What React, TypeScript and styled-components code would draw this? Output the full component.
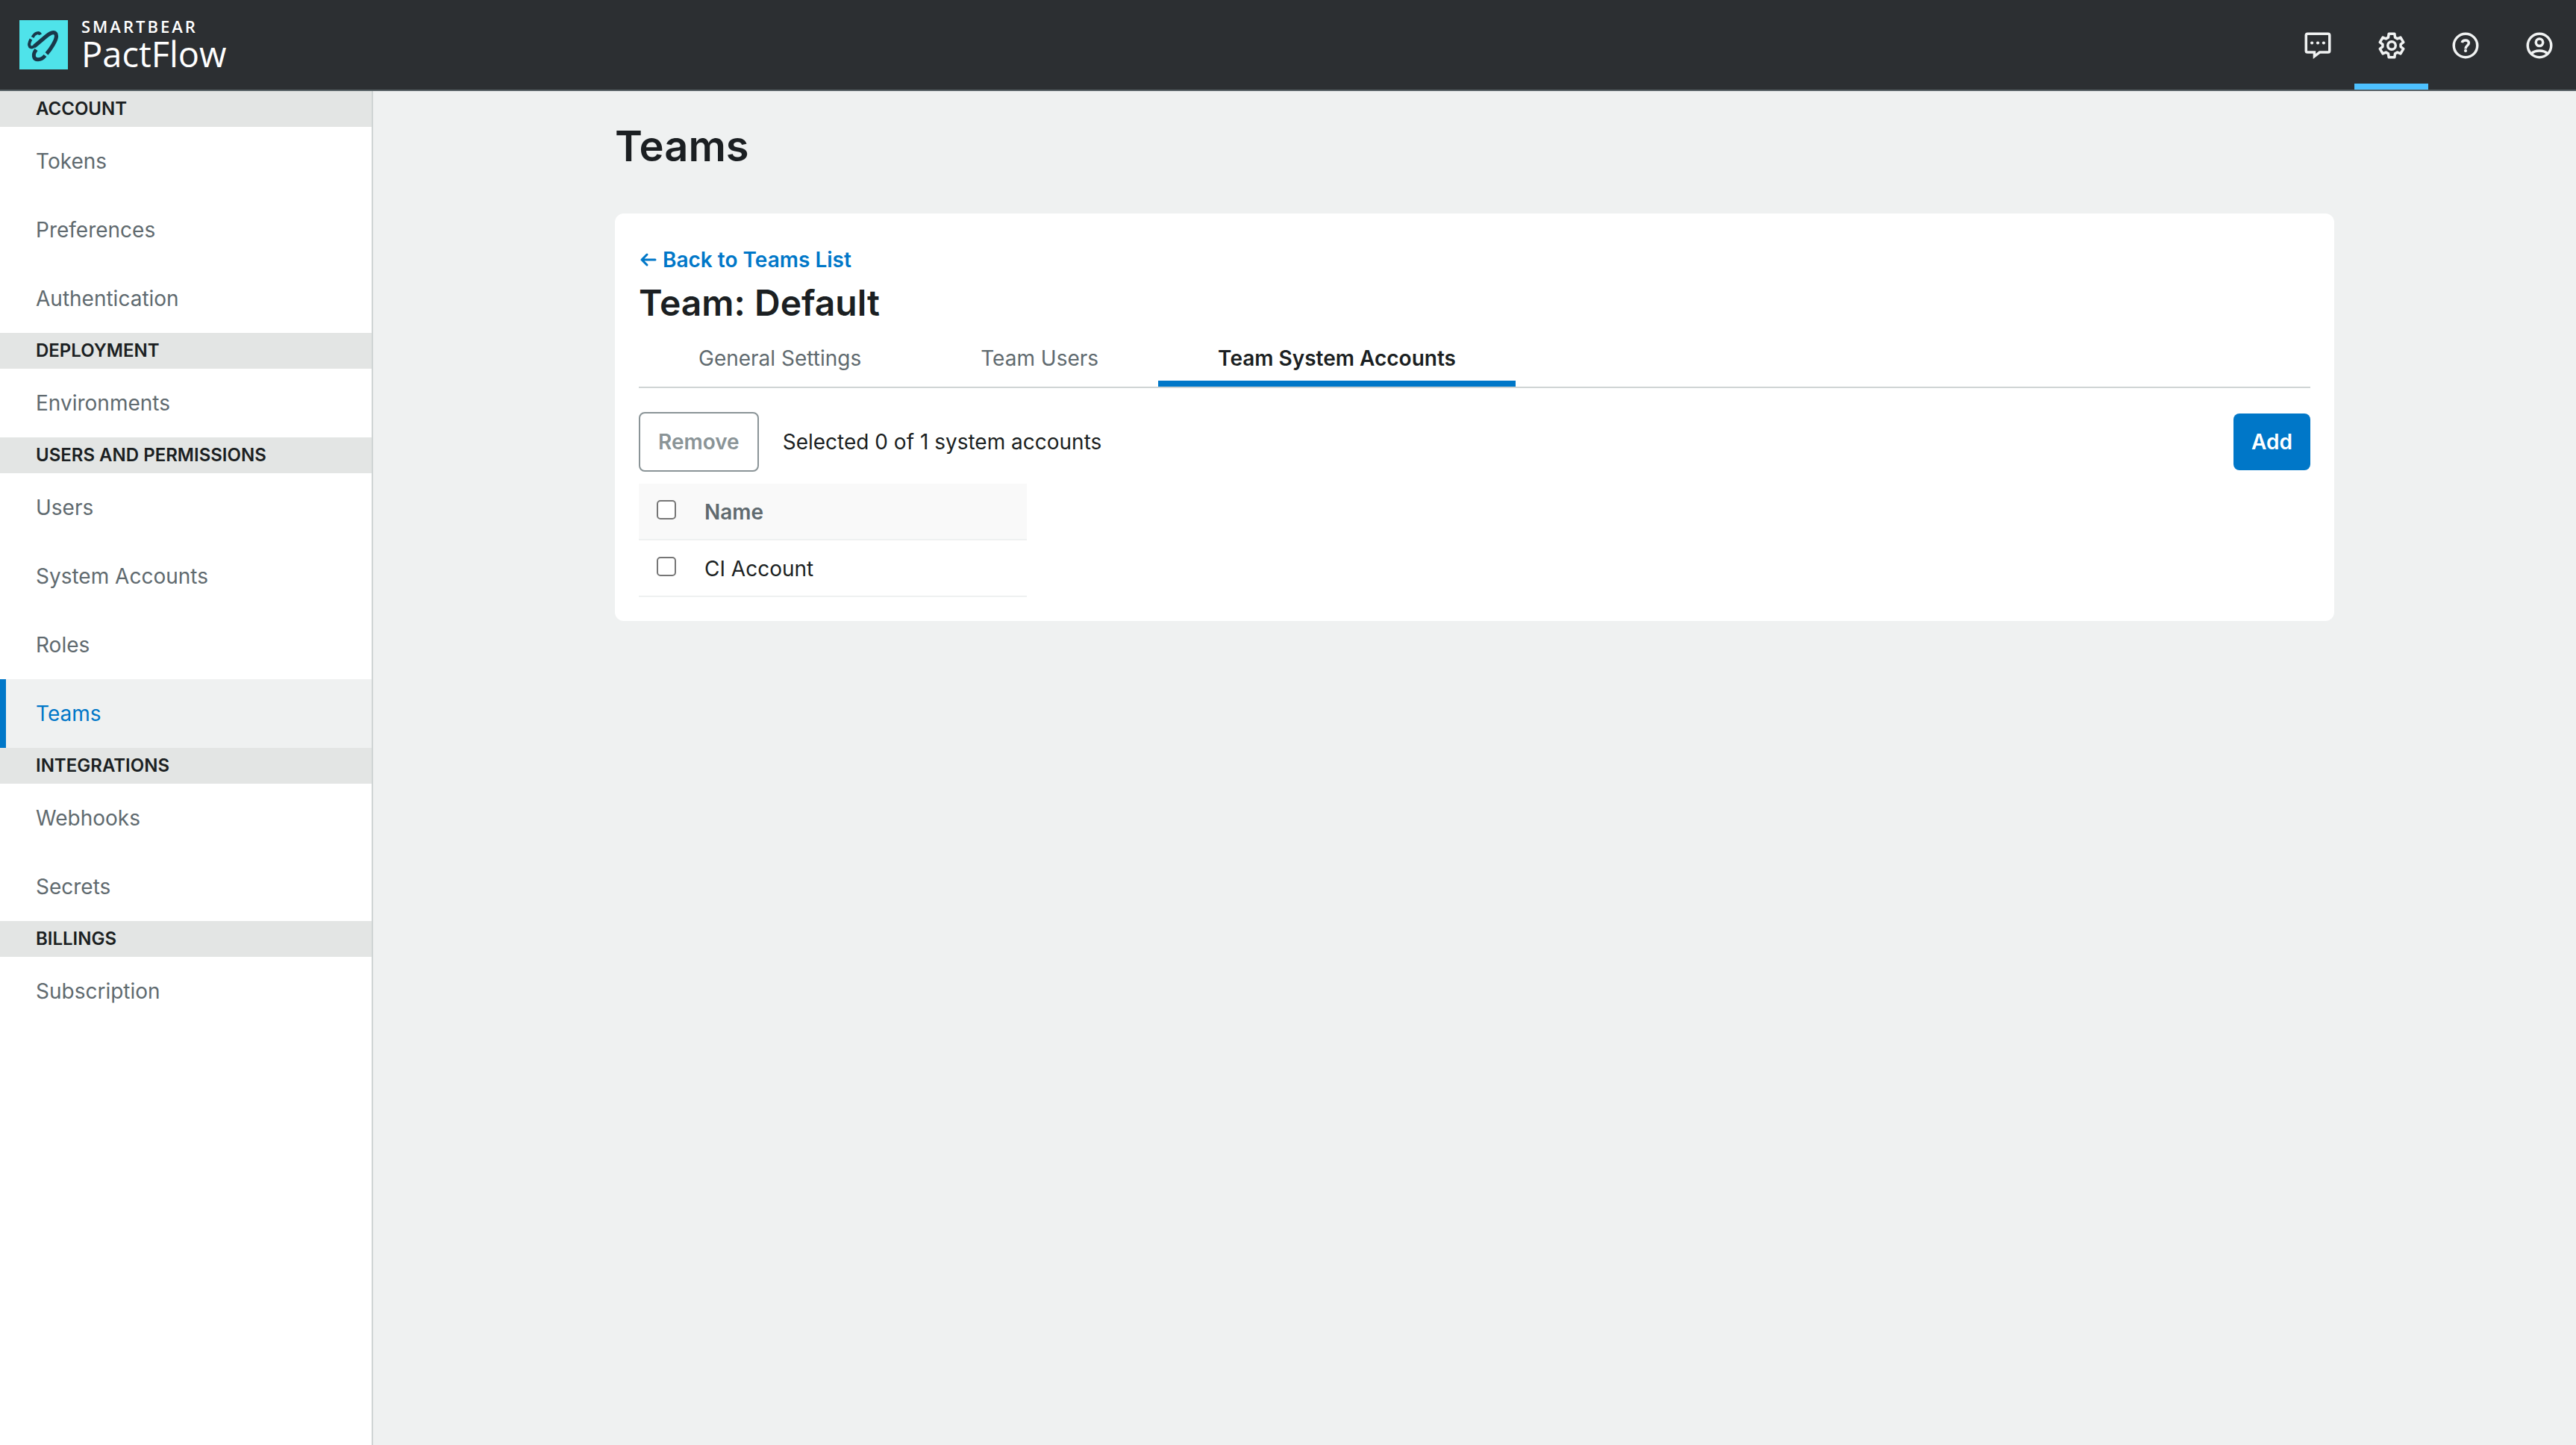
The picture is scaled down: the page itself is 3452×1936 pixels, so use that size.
import React, { useState } from "react";
import styled, { createGlobalStyle } from "styled-components";

const color = {
  ink: "#1b1f22",
  muted: "#606a6f",
  faint: "#8a9497",
  blue: "#0077c8",
  sky: "#4dc1ff",
  page: "#eff1f1",
  band: "#e3e5e4",
  line: "#d0d5d5",
  bar: "#2c2f32",
};

const GlobalStyle = createGlobalStyle`
  *, *::before, *::after { box-sizing: border-box; }
  body {
    margin: 0;
    font-family: Inter, "Liberation Sans", sans-serif;
    font-size: 28px;
    line-height: 40px;
    color: ${color.ink};
    background: ${color.page};
  }
  h1, h2, ul { margin: 0; padding: 0; }
  button, input { font: inherit; }
`;

const Shell = styled.div`
  min-height: 100vh;
  display: flex;
  flex-direction: column;
`;

const TopBar = styled.header`
  display: flex;
  justify-content: space-between;
  height: 122px;
  background: ${color.bar};
  border-bottom: 2px solid #566064;
`;

const Brand = styled.a`
  display: flex;
  align-items: center;
  gap: 18px;
  padding-left: 26px;
  color: #fff;
  text-decoration: none;
  font-family: "Open Sans", "Noto Sans", sans-serif;
`;

const Mark = styled.svg`
  width: 65px;
  height: 66px;
`;

const BrandText = styled.span`
  display: flex;
  flex-direction: column;
`;

const Company = styled.span`
  font-size: 22px;
  line-height: 24px;
  font-weight: 600;
  letter-spacing: 3px;
`;

const Product = styled.span`
  font-size: 47px;
  line-height: 50px;
`;

const Tools = styled.nav`
  display: flex;
`;

const Tool = styled.button<{ $active?: boolean }>`
  display: flex;
  align-items: center;
  justify-content: center;
  width: 99px;
  padding: 10px 0 0;
  border: 0;
  border-bottom: 8px solid ${(p) => (p.$active ? color.sky : "transparent")};
  background: none;
  color: #f0f2f2;
`;

const Glyph = styled.svg`
  width: 42px;
  height: 42px;
  fill: none;
  stroke: currentColor;
  stroke-width: 2;
`;

const Body = styled.div`
  flex: 1;
  display: flex;
`;

const Sidebar = styled.nav`
  flex: none;
  width: 500px;
  background: #fff;
  border-right: 2px solid ${color.line};
`;

const GroupTitle = styled.h2`
  padding-left: 48px;
  font-size: 24px;
  line-height: 48px;
  font-weight: 600;
  text-transform: uppercase;
  background: ${color.band};
`;

const Links = styled.ul`
  list-style: none;
`;

const SideLink = styled.a<{ $active: boolean }>`
  display: block;
  padding-left: 40px;
  line-height: 92px;
  text-decoration: none;
  border-left: 8px solid ${(p) => (p.$active ? color.blue : "transparent")};
  color: ${(p) => (p.$active ? color.blue : color.muted)};
  background: ${(p) => (p.$active ? color.page : "transparent")};
`;

const Main = styled.main`
  flex: 1;
  padding: 40px 32px;
`;

const Content = styled.div`
  max-width: 2304px;
  margin: 0 auto;
`;

const PageTitle = styled.h1`
  margin-bottom: 56px;
  font-size: 56px;
  line-height: 68px;
  font-weight: 600;
`;

const Card = styled.section`
  padding: 42px 32px 32px;
  border-radius: 12px;
  background: #fff;
`;

const BackLink = styled.a`
  display: inline-flex;
  align-items: center;
  gap: 8px;
  color: ${color.blue};
  font-weight: 600;
  text-decoration: none;
`;

const Arrow = styled.svg`
  width: 24px;
  height: 24px;
  fill: none;
  stroke: currentColor;
  stroke-width: 3;
  stroke-linecap: round;
  stroke-linejoin: round;
`;

const TeamTitle = styled.h2`
  font-size: 48px;
  line-height: 72px;
  font-weight: 600;
`;

const Tabs = styled.div`
  display: flex;
  border-bottom: 2px solid ${color.line};
`;

const Tab = styled.button<{ $active: boolean }>`
  padding: 18px 80px 10px;
  border: 0;
  border-bottom: 8px solid ${(p) => (p.$active ? color.blue : "transparent")};
  background: none;
  color: ${(p) => (p.$active ? color.ink : color.muted)};
  font-weight: ${(p) => (p.$active ? 600 : 400)};
`;

const Actions = styled.div`
  display: flex;
  align-items: center;
  gap: 32px;
  margin: 32px 0 16px;
`;

const RemoveButton = styled.button`
  padding: 18px 24px;
  border: 2px solid ${color.faint};
  border-radius: 8px;
  background: #fff;
  color: ${color.faint};
  font-weight: 600;
`;

const AddButton = styled.button`
  margin-left: auto;
  padding: 18px 24px;
  border: 0;
  border-radius: 8px;
  background: ${color.blue};
  color: #fff;
  font-weight: 600;
`;

const Table = styled.table`
  width: 520px;
  border-collapse: separate;
  border-spacing: 0;
  text-align: left;
`;

const HeadRow = styled.tr`
  background: #f9f9f9;
  color: ${color.muted};
`;

const cell = `
  height: 76px;
  border-bottom: 2px solid ${color.page};
`;

const Th = styled.th`
  ${cell}
  padding: 2px 0 0;
  font-weight: 600;
`;

const Td = styled.td`
  ${cell}
  padding: 2px 0 0;
`;

const CheckCell = styled.td`
  ${cell}
  width: 88px;
  padding: 0 0 4px 24px;
`;

const Check = styled.input`
  display: block;
  appearance: none;
  width: 26px;
  height: 26px;
  margin: 0;
  border: 2px solid #767676;
  border-radius: 5px;
  background: #fff;
  &:checked { background: ${color.blue}; }
`;

const groups = [
  { title: "Account", links: ["Tokens", "Preferences", "Authentication"] },
  { title: "Deployment", links: ["Environments"] },
  { title: "Users and Permissions", links: ["Users", "System Accounts", "Roles", "Teams"] },
  { title: "Integrations", links: ["Webhooks", "Secrets"] },
  { title: "Billings", links: ["Subscription"] },
];

const tabs = ["General Settings", "Team Users", "Team System Accounts"];
const accounts = ["CI Account"];

const BrandMark = () => (
  <Mark viewBox="0 0 65 66" aria-hidden="true">
    <rect width="65" height="66" fill="#4fe3ea" />
    <g fill="none" stroke="#19384a">
      <path strokeWidth="4" d="M28 19.500C26.500 15.500 21 16.500 17.500 23" />
      <path strokeWidth="4" d="M15.500 25.500C13 30 12.500 33.500 14 35.500C16 37.500 19.500 35.500 22 33.500L36 21.500" />
      <path strokeWidth="5.200" d="M20 35L36 21.500C43 15.500 49.500 14.500 49.500 21.500C49.500 27 42 39 36.500 45" />
      <path strokeWidth="5" d="M22.500 39.500C17.500 46 18.500 52.800 25 52.800C29 52.800 32 50.500 34.500 47.500" />
    </g>
  </Mark>
);

const ChatIcon = () => (
  <Glyph viewBox="0 0 24 24" aria-hidden="true">
    <path d="M4.200 3H19.800Q21 3 21 4.200V16Q21 17.200 19.800 17.200H13.400L9.400 20.300V17.200H4.200Q3 17.200 3 16V4.200Q3 3 4.200 3Z" />
    <g fill="currentColor" stroke="none">
      <circle cx="7.500" cy="10" r="1.200" />
      <circle cx="12" cy="10" r="1.200" />
      <circle cx="16.500" cy="10" r="1.200" />
    </g>
  </Glyph>
);

const GearIcon = () => (
  <Glyph viewBox="0 0 24 24" aria-hidden="true">
    <path strokeLinejoin="round" d="M9.800 3H14.200L14.600 5.800L16.400 6.800L18.800 5.800L21 9.500L18.900 11.100V12.900L21 14.500L18.800 18.200L16.400 17.200L14.600 18.200L14.200 21H9.800L9.400 18.200L7.600 17.200L5.200 18.200L3 14.500L5.100 12.900V11.100L3 9.500L5.200 5.800L7.600 6.800L9.400 5.800Z" />
    <circle cx="12" cy="12" r="3" />
  </Glyph>
);

const HelpIcon = () => (
  <Glyph viewBox="0 0 24 24" aria-hidden="true">
    <circle cx="12" cy="12" r="9" />
    <path d="M9.300 9.800C9.700 7.400 14.500 7.400 14.500 10C14.500 12 12 12 12 14.500" />
    <circle cx="12" cy="16" r="1.200" fill="currentColor" stroke="none" />
  </Glyph>
);

const UserIcon = () => (
  <Glyph viewBox="0 0 24 24" aria-hidden="true">
    <circle cx="12" cy="12" r="9" />
    <circle cx="12" cy="9.600" r="2.700" />
    <path d="M5.800 18.200C8.500 15.200 15.500 15.200 18.200 18.200" />
  </Glyph>
);

export default function App() {
  const [tab, setTab] = useState("Team System Accounts");
  const [selected, setSelected] = useState<string[]>([]);
  const toggle = (name: string) =>
    setSelected((s) => (s.includes(name) ? s.filter((n) => n !== name) : [...s, name]));

  return (
    <Shell>
      <GlobalStyle />
      <TopBar>
        <Brand href="#">
          <BrandMark />
          <BrandText>
            <Company>SMARTBEAR</Company>
            <Product>PactFlow</Product>
          </BrandText>
        </Brand>
        <Tools>
          <Tool aria-label="Feedback"><ChatIcon /></Tool>
          <Tool aria-label="Settings" $active><GearIcon /></Tool>
          <Tool aria-label="Help"><HelpIcon /></Tool>
          <Tool aria-label="Profile"><UserIcon /></Tool>
        </Tools>
      </TopBar>
      <Body>
        <Sidebar>
          {groups.map((group) => (
            <div key={group.title}>
              <GroupTitle>{group.title}</GroupTitle>
              <Links>
                {group.links.map((link) => (
                  <li key={link}>
                    <SideLink href="#" $active={link === "Teams"}>{link}</SideLink>
                  </li>
                ))}
              </Links>
            </div>
          ))}
        </Sidebar>
        <Main>
          <Content>
            <PageTitle>Teams</PageTitle>
            <Card>
              <BackLink href="#">
                <Arrow viewBox="0 0 24 24" aria-hidden="true">
                  <path d="M11 5L4 12L11 19M4 12H22" />
                </Arrow>
                Back to Teams List
              </BackLink>
              <TeamTitle>Team: Default</TeamTitle>
              <Tabs role="tablist">
                {tabs.map((name) => (
                  <Tab key={name} role="tab" aria-selected={tab === name} $active={tab === name} onClick={() => setTab(name)}>
                    {name}
                  </Tab>
                ))}
              </Tabs>
              <Actions>
                <RemoveButton disabled={selected.length === 0}>Remove</RemoveButton>
                <span>{`Selected ${selected.length} of ${accounts.length} system accounts`}</span>
                <AddButton>Add</AddButton>
              </Actions>
              <Table>
                <thead>
                  <HeadRow>
                    <CheckCell>
                      <Check
                        type="checkbox"
                        aria-label="Select all"
                        checked={selected.length === accounts.length}
                        onChange={(e) => setSelected(e.target.checked ? accounts : [])}
                      />
                    </CheckCell>
                    <Th scope="col">Name</Th>
                  </HeadRow>
                </thead>
                <tbody>
                  {accounts.map((name, i) => (
                    <tr key={name}>
                      <CheckCell>
                        <Check id={`account-${i}`} type="checkbox" checked={selected.includes(name)} onChange={() => toggle(name)} />
                      </CheckCell>
                      <Td><label htmlFor={`account-${i}`}>{name}</label></Td>
                    </tr>
                  ))}
                </tbody>
              </Table>
            </Card>
          </Content>
        </Main>
      </Body>
    </Shell>
  );
}
